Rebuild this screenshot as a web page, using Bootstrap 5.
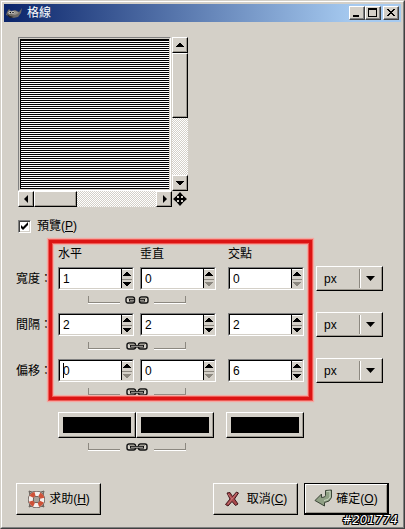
<!DOCTYPE html>
<html lang="zh-Hant">
<head>
<meta charset="utf-8">
<meta name="viewport" content="width=device-width, initial-scale=1">
<title>格線</title>
<link href="https://cdn.jsdelivr.net/npm/bootstrap@5.3.0/dist/css/bootstrap.min.css" rel="stylesheet">
<style>
:root { --face: #d4d0c8; --shade: #8c8880; }
body { background: var(--face); color: #000; font: 12px/18px "Liberation Sans", "Noto Sans CJK TC", sans-serif; }
button, input, select { font: inherit; color: inherit; }
.dialog-window { border: 1px solid var(--face); border-right-color: #404040; border-bottom-color: #404040; min-height: 100vh; }
.dialog-inner { border: 1px solid #fff; border-right-color: #808080; border-bottom-color: #808080; padding: 2px; }
.title-bar { background: linear-gradient(90deg, #0a246a, #a6caf0 88%); height: 18px; color: #fff; padding: 0 2px; }
.title-bar h1 { font: inherit; line-height: 20px; }
.caption-btn { width: 16px; height: 14px; padding: 0; background: var(--face); border: 1px solid #fff; border-right-color: #404040; border-bottom-color: #404040; box-shadow: inset -1px -1px 0 #808080; }
.caption-btn.close-btn { margin-left: 2px; }
.caption-btn svg, .bevel svg, .spin svg, .combo svg, .chain svg { display: block; }
.content { padding: 15px 12px 0; }
.preview-grid { display: grid; grid-template-columns: 154px 16px; grid-template-rows: 154px 16px; margin-left: 2px; }
.preview-canvas { border: 1px solid #808080; border-right-color: #fff; border-bottom-color: #fff; padding: 1px; margin-right: 1px; }
.preview-canvas div { background: repeating-linear-gradient(#000 0 1px, #fff 1px 2px); border-left: 1px solid #000; border-top: 1px solid #000; }
.track { background: repeating-conic-gradient(#fff 0 25%, var(--face) 0 50%) 0 0 / 2px 2px; }
.bevel { background: var(--face); border: 1px solid #fff; border-right-color: #000; border-bottom-color: #000; box-shadow: inset -1px -1px 0 #9c988f; padding: 0; border-radius: 0; }
.arrow-btn { width: 16px; height: 16px; flex: none; display: flex; align-items: center; justify-content: center; }
.thumb-v { height: 65px; }
.thumb-h { width: 43px; }
.preview-toggle { margin: 10px 0 0 2px; gap: 6px; }
.preview-toggle input { appearance: none; width: 13px; height: 13px; margin: 0; background: #fff; border: 1px solid #808080; border-right-color: #fff; border-bottom-color: #fff; box-shadow: inset 1px 1px 0 #404040, inset -1px -1px 0 var(--face); }
.preview-toggle input:checked { background: #fff url("data:image/svg+xml,%3Csvg xmlns='http://www.w3.org/2000/svg' viewBox='0 0 11 11'%3E%3Cpath d='M2 4v3l2 2 5-5V1L4 6z'/%3E%3C/svg%3E") center / 11px 11px no-repeat; }
.params { margin-top: 9px; padding-right: 6px; }
.param-row { display: grid; grid-template-columns: 42px 1fr 6px 1fr 12px 1fr 12px 67px; align-items: center; }
.param-row > :nth-child(2) { grid-column: 2; }
.param-row > :nth-child(3) { grid-column: 4; }
.param-row > :nth-child(4) { grid-column: 6; }
.param-row > :nth-child(5) { grid-column: 8; }
.param-row label, .head-row span { line-height: 20px; }
.head-row { margin-bottom: 2px; }
.swatch-row { display: grid; grid-template-columns: 42px 1fr 1fr 12px 1fr 79px; margin-top: 16px; }
.swatch-row > :nth-child(1) { grid-column: 2; }
.swatch-row > :nth-child(3) { grid-column: 5; }
.swatch-btn { height: 26px; padding: 4px; }
.swatch-btn span { display: block; height: 16px; background: #000; }
.spin { height: 23px; border: 1px solid #808080; border-right-color: #fff; border-bottom-color: #fff; }
.spin-body { border: 1px solid #000; border-right-color: var(--face); border-bottom-color: var(--face); background: #fff; }
.spin input { border: 0; outline: 0; padding: 0 0 0 3px; width: 100%; min-width: 0; background: transparent; border-radius: 0; }
.spin.editing .spin-body::before { content: ""; position: absolute; left: 3px; top: 2px; width: 1px; height: 15px; background: #000; }
.spin-arrows { width: 11px; border-left: 1px solid #000; flex: none; }
.spin-arrows button { flex: 1; display: flex; align-items: center; justify-content: center; padding: 0; border: 0; border-top: 1px solid #fff; background: var(--face); min-height: 0; }
.spin-arrows button + button { border-top-color: var(--shade); }
.combo { height: 25px; }
.combo select { appearance: none; width: 100%; height: 100%; background: transparent; border: 0; padding: 0 0 0 7px; border-radius: 0; }
.combo svg { position: absolute; right: 4px; top: 2px; pointer-events: none; }
.chain-row { margin-top: 5px; height: 8px; display: grid; grid-template-columns: 42px 1fr 6px 1fr 12px 1fr 79px; }
.params > .param-row ~ .param-row:not(.first-row) { margin-top: 8px; }
.chain { grid-column: 2 / 5; margin: 0 30px; }
.bracket { flex: 1; height: 7px; border-bottom: 1px solid var(--shade); box-shadow: 0 1px 0 #fff; }
.bracket.start { border-left: 1px solid var(--shade); }
.bracket.end { border-right: 1px solid var(--shade); }
.chain button { border: 0; background: none; padding: 0 5px; }
.focus-area { left: 42px; right: 0; top: 0; }
.focus-frame { left: -9px; right: 77px; top: -4px; height: 160px; border: 3px solid #dc1414; box-shadow: 0 0 0 1px #ee5a54, 0 0 1px 2px #f3a8a2, inset 0 0 0 1px #ee5a54, inset 0 0 1px 2px #f3a8a2; pointer-events: none; }
.actions { padding: 0 12px 10px; gap: 6px; }
.action-btn { width: 85px; height: 32px; display: flex; align-items: center; justify-content: center; gap: 3px; white-space: nowrap; }
.action-btn span { line-height: 20px; }
.action-btn.default { border: 2px solid #000; border-top-width: 1px; border-left-width: 1px; box-shadow: inset 1px 1px 0 #fff, inset -1px -1px 0 #9c988f; }
.stamp { right: 5px; bottom: 0; font: italic 12px/13px "DejaVu Sans", sans-serif; color: #fff; text-shadow: 1px 0 #000, -1px 0 #000, 0 1px #000, 0 -1px #000, 1px 1px #000, -1px -1px #000, 1px -1px #000, -1px 1px #000; }
</style>
<script src="https://cdn.jsdelivr.net/npm/bootstrap@5.3.0/dist/js/bootstrap.bundle.min.js"></script>
</head>
<body>
<svg width="0" height="0" class="position-absolute" aria-hidden="true">
  <symbol id="up" viewBox="0 0 8 4"><path shape-rendering="crispEdges" d="M3 0h2v1h1v1h1v1h1v1H0V3h1V2h1V1h1z"/></symbol>
  <symbol id="down" viewBox="0 0 8 4"><path shape-rendering="crispEdges" d="M0 0h8v1H7v1H6v1H5v1H3V3H2V2H1V1H0z"/></symbol>
  <symbol id="linked" viewBox="0 0 24 8"><g fill="none" stroke="#111"><rect x="2" y="1" width="8.500" height="6" rx="2" stroke-width="1.400"/><rect x="13.500" y="1" width="8.500" height="6" rx="2" stroke-width="1.400"/><path stroke="#88847c" d="M4 2.200h5M15 2.200h5"/><path stroke-width="2.600" d="M5 4.300h14"/><path stroke="#c4c0b8" stroke-width=".9" d="M6 4.300h12"/></g></symbol>
  <symbol id="unlinked" viewBox="0 0 24 8"><g fill="none" stroke="#111"><rect x="1" y="1" width="8.500" height="6" rx="2" stroke-width="1.400"/><rect x="14.500" y="1" width="8.500" height="6" rx="2" stroke-width="1.400"/><path stroke="#88847c" d="M3 2.200h5M16 2.200h5"/><path stroke-width="2.600" d="M4 4.300h6M14 4.300h6"/><path stroke="#c4c0b8" stroke-width=".9" d="M5 4.300h4M15 4.300h4"/></g></symbol>
  <symbol id="combo-arrow" viewBox="0 0 19 19"><path shape-rendering="crispEdges" fill="#8c8880" d="M0 0h1v19H0z"/><path shape-rendering="crispEdges" fill="#fff" d="M1 0h1v19H1z"/><path d="M7 7h9l-4.500 5z"/></symbol>
</svg>

<main class="dialog-window d-flex">
<div class="dialog-inner flex-fill d-flex flex-column position-relative">
  <header class="title-bar d-flex align-items-center">
    <svg width="17" height="14" viewBox="0 0 17 14" aria-hidden="true"><path d="M1 6l2-3 2 2 4-1 4 2 3-4-1 5-3 4-5 1-4-2-3-1z" fill="#6e6a66"/><path d="M5 5l5 0 3 2-4 2-4-1z" fill="#98938c"/><circle cx="4" cy="6.500" r="1.500" fill="#ddd"/><circle cx="7" cy="6.500" r="1.300" fill="#eee"/><circle cx="4.300" cy="6.600" r=".8"/><circle cx="7" cy="6.600" r=".8"/><path d="M1 8l3 2 4 1-4 1-2-2z" fill="#2a2624"/></svg>
    <h1 class="m-0 ms-1 flex-fill">格線</h1>
    <button class="caption-btn" type="button" aria-label="最小化"><svg width="14" height="12" viewBox="0 0 14 12" shape-rendering="crispEdges"><path d="M3 8h6v2H3z"/></svg></button>
    <button class="caption-btn" type="button" aria-label="最大化"><svg width="14" height="12" viewBox="0 0 14 12" shape-rendering="crispEdges"><path fill-rule="evenodd" d="M2 1h9v9H2zM3 3v6h7V3z"/></svg></button>
    <button class="caption-btn close-btn" type="button" aria-label="關閉"><svg width="14" height="12" viewBox="0 0 14 12" shape-rendering="crispEdges"><path d="M3 2h2v1h1v1h2V3h1V2h2v1h-1v1H9v1H8v1h1v1h1v1h1v1H9V8H8V7H6v1H5v1H3V8h1V7h1V6h1V5H5V4H4V3H3z"/></svg></button>
  </header>

  <form class="content flex-fill">
    <div class="preview-grid">
      <div class="preview-canvas d-flex"><div class="flex-fill"></div></div>
      <div class="track d-flex flex-column">
        <button class="bevel arrow-btn" type="button" aria-label="上"><svg width="8" height="4"><use href="#up"/></svg></button>
        <div class="bevel thumb-v"></div>
        <button class="bevel arrow-btn mt-auto" type="button" aria-label="下"><svg width="8" height="4"><use href="#down"/></svg></button>
      </div>
      <div class="track d-flex">
        <button class="bevel arrow-btn" type="button" aria-label="左"><svg width="5" height="8" viewBox="0 0 5 8"><path d="M0 4l4-4v8z"/></svg></button>
        <div class="bevel thumb-h"></div>
        <button class="bevel arrow-btn ms-auto" type="button" aria-label="右"><svg width="5" height="8" viewBox="0 0 5 8"><path d="M5 4L1 0v8z"/></svg></button>
      </div>
      <svg width="16" height="16" viewBox="0 0 16 16" aria-hidden="true"><path d="M8 1l3.500 4H9v2h2V4.500L15 8l-4 3.500V9H9v2h2.500L8 15l-3.500-4H7V9H5v2.500L1 8l4-3.500V7h2V5H4.500z"/></svg>
    </div>

    <div class="preview-toggle d-flex align-items-center">
      <input type="checkbox" id="preview" checked>
      <label for="preview">預覽(<u>P</u>)</label>
    </div>

    <div class="params position-relative">
      <div class="param-row head-row"><span></span><span>水平</span><span>垂直</span><span>交點</span></div>

      <div class="param-row first-row">
        <label for="w1">寬度：</label>
        <div class="spin d-flex"><div class="spin-body d-flex flex-fill position-relative"><input id="w1" value="1"><div class="spin-arrows d-flex flex-column"><button type="button" aria-label="增加"><svg width="8" height="4"><use href="#up"/></svg></button><button type="button" aria-label="減少"><svg width="8" height="4"><use href="#down"/></svg></button></div></div></div>
        <div class="spin d-flex"><div class="spin-body d-flex flex-fill position-relative"><input aria-label="寬度 垂直" value="0"><div class="spin-arrows d-flex flex-column"><button type="button" aria-label="增加"><svg width="8" height="4"><use href="#up"/></svg></button><button type="button" aria-label="減少"><svg width="8" height="4" fill="#8c8880"><use href="#down"/></svg></button></div></div></div>
        <div class="spin d-flex"><div class="spin-body d-flex flex-fill position-relative"><input aria-label="寬度 交點" value="0"><div class="spin-arrows d-flex flex-column"><button type="button" aria-label="增加"><svg width="8" height="4"><use href="#up"/></svg></button><button type="button" aria-label="減少"><svg width="8" height="4" fill="#8c8880"><use href="#down"/></svg></button></div></div></div>
        <div class="combo bevel position-relative"><select aria-label="寬度單位"><option>px</option></select><svg width="19" height="19"><use href="#combo-arrow"/></svg></div>
      </div>
      <div class="chain-row"><div class="chain d-flex"><span class="bracket start"></span><button type="button" aria-label="連結寬度"><svg width="24" height="8"><use href="#unlinked"/></svg></button><span class="bracket end"></span></div></div>

      <div class="param-row">
        <label for="s1">間隔：</label>
        <div class="spin d-flex"><div class="spin-body d-flex flex-fill position-relative"><input id="s1" value="2"><div class="spin-arrows d-flex flex-column"><button type="button" aria-label="增加"><svg width="8" height="4"><use href="#up"/></svg></button><button type="button" aria-label="減少"><svg width="8" height="4"><use href="#down"/></svg></button></div></div></div>
        <div class="spin d-flex"><div class="spin-body d-flex flex-fill position-relative"><input aria-label="間隔 垂直" value="2"><div class="spin-arrows d-flex flex-column"><button type="button" aria-label="增加"><svg width="8" height="4"><use href="#up"/></svg></button><button type="button" aria-label="減少"><svg width="8" height="4"><use href="#down"/></svg></button></div></div></div>
        <div class="spin d-flex"><div class="spin-body d-flex flex-fill position-relative"><input aria-label="間隔 交點" value="2"><div class="spin-arrows d-flex flex-column"><button type="button" aria-label="增加"><svg width="8" height="4"><use href="#up"/></svg></button><button type="button" aria-label="減少"><svg width="8" height="4"><use href="#down"/></svg></button></div></div></div>
        <div class="combo bevel position-relative"><select aria-label="間隔單位"><option>px</option></select><svg width="19" height="19"><use href="#combo-arrow"/></svg></div>
      </div>
      <div class="chain-row"><div class="chain d-flex"><span class="bracket start"></span><button type="button" aria-label="連結間隔"><svg width="24" height="8"><use href="#linked"/></svg></button><span class="bracket end"></span></div></div>

      <div class="param-row">
        <label for="o1">偏移：</label>
        <div class="spin editing d-flex"><div class="spin-body d-flex flex-fill position-relative"><input id="o1" value="0"><div class="spin-arrows d-flex flex-column"><button type="button" aria-label="增加"><svg width="8" height="4"><use href="#up"/></svg></button><button type="button" aria-label="減少"><svg width="8" height="4" fill="#8c8880"><use href="#down"/></svg></button></div></div></div>
        <div class="spin d-flex"><div class="spin-body d-flex flex-fill position-relative"><input aria-label="偏移 垂直" value="0"><div class="spin-arrows d-flex flex-column"><button type="button" aria-label="增加"><svg width="8" height="4"><use href="#up"/></svg></button><button type="button" aria-label="減少"><svg width="8" height="4" fill="#8c8880"><use href="#down"/></svg></button></div></div></div>
        <div class="spin d-flex"><div class="spin-body d-flex flex-fill position-relative"><input aria-label="偏移 交點" value="6"><div class="spin-arrows d-flex flex-column"><button type="button" aria-label="增加"><svg width="8" height="4"><use href="#up"/></svg></button><button type="button" aria-label="減少"><svg width="8" height="4"><use href="#down"/></svg></button></div></div></div>
        <div class="combo bevel position-relative"><select aria-label="偏移單位"><option>px</option></select><svg width="19" height="19"><use href="#combo-arrow"/></svg></div>
      </div>
      <div class="chain-row"><div class="chain d-flex"><span class="bracket start"></span><button type="button" aria-label="連結偏移"><svg width="24" height="8"><use href="#linked"/></svg></button><span class="bracket end"></span></div></div>

      <div class="swatch-row">
        <button class="bevel swatch-btn" type="button" aria-label="水平顏色"><span></span></button>
        <button class="bevel swatch-btn" type="button" aria-label="垂直顏色"><span></span></button>
        <button class="bevel swatch-btn" type="button" aria-label="交點顏色"><span></span></button>
      </div>
      <div class="chain-row"><div class="chain d-flex"><span class="bracket start"></span><button type="button" aria-label="連結顏色"><svg width="24" height="8"><use href="#linked"/></svg></button><span class="bracket end"></span></div></div>
      <div class="focus-area position-absolute"><div class="focus-frame position-absolute"></div></div>
    </div>
  </form>

  <footer class="actions d-flex">
    <button class="bevel action-btn me-auto" type="button"><svg width="19" height="19" viewBox="0 0 19 19" aria-hidden="true"><path d="M2 1l3 1h9l3-1-1 4v9l1 3-3-1H5l-3 1 1-3V5z" fill="#a8a29a" stroke="#68605a"/><circle cx="9.500" cy="9.500" r="5.800" fill="none" stroke="#3c2c28" stroke-width="5.500"/><circle cx="9.500" cy="9.500" r="5.800" fill="none" stroke="#f4efec" stroke-width="4.400"/><circle cx="9.500" cy="9.500" r="5.800" fill="none" stroke="#cf5238" stroke-width="4.400" stroke-dasharray="4.555 4.555" stroke-dashoffset="-2.300"/></svg><span>求助(<u>H</u>)</span></button>
    <button class="bevel action-btn" type="button"><svg width="16" height="16" viewBox="0 0 16 16" aria-hidden="true"><path d="M3 2l3-.5 2.500 4L12.500 1l2 1-4 6 3.500 5-2.500 1.500L8 10.500 4 15l-2.500-1.500L6 8z" fill="#a8484c" stroke="#42181c"/><path d="M4 3l4 5M13 2L4 13" stroke="#cf8080" stroke-width=".8"/></svg><span class="ms-1">取消(<u>C</u>)</span></button>
    <button class="bevel action-btn default" type="submit"><svg width="19" height="19" viewBox="0 0 19 19" aria-hidden="true"><path d="M11.500 1.500l6-.5v7.500L15 12l-4.500 1.500V17L1 11.500 7.500 5v3.500l3-.5 1-1.500z" fill="#8fa084" stroke="#3a4436"/><path d="M12.500 2.500l3.500-.3V8l-2 2.500-4 1" fill="none" stroke="#c8d4bf"/></svg><span>確定(<u>O</u>)</span></button>
  </footer>
  <span class="stamp position-absolute">#201774</span>
</div>
</main>
</body>
</html>
